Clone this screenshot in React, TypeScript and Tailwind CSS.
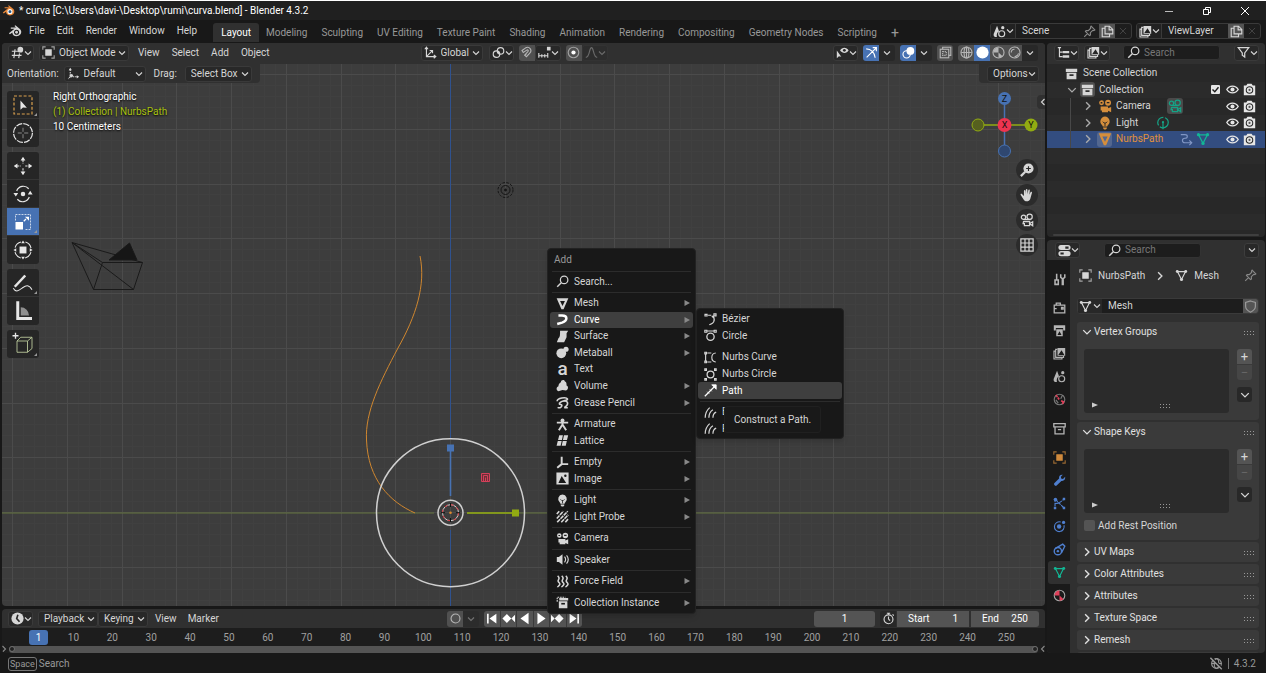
import React from "react";

/* ---------- icons: 16 x 16 drawings in the current colour ---------- */

const line = { fill: "none", stroke: "currentColor", strokeWidth: 1.4 };

const drawings: Record<string, React.ReactNode> = {
  blender: (
    <>
      <path d="M1 10.5 7.5 5.3H3.2V4h6L7.4 2.4l1-.9 5.2 4.3c3 2.6 1.6 8.2-3.8 8.2-3.2 0-5-2.2-4.8-4.4L2.2 11.7z" fill="currentColor" />
      <circle cx="9.8" cy="9.4" r="2.9" fill="#181818" />
      <circle cx="9.8" cy="9.4" r="1.6" fill="currentColor" />
    </>
  ),
  blenderColor: (
    <>
      <path d="M1 10.5 7.5 5.3H3.2V4h6L7.4 2.4l1-.9 5.2 4.3c3 2.6 1.6 8.2-3.8 8.2-3.2 0-5-2.2-4.8-4.4L2.2 11.7z" fill="#e8883a" />
      <circle cx="9.8" cy="9.4" r="3.1" fill="#fff" />
      <circle cx="9.8" cy="9.4" r="1.8" fill="#265787" />
    </>
  ),
  editor3d: (
    <>
      <path d="M1 6.5h8M1 11.5h12M5 4 3.5 15M10.5 9 9.5 15" {...line} />
      <circle cx="11.5" cy="4.5" r="3.5" fill="currentColor" />
    </>
  ),
  object: (
    <>
      <path d="M1 4.500V1h3.500M11.500 1H15v3.500M15 11.500V15h-3.500M4.500 15H1v-3.500" {...line} opacity=".7" />
      <rect x="4" y="4" width="8" height="8" fill="currentColor" />
    </>
  ),
  orient: (
    <>
      <path d="M4 3v9h9M4 12l-2.500 2.500" {...line} strokeDasharray="2 1" />
      <path d="m2 4 2-3 2 3zM12 10l3 2-3 2z" fill="currentColor" />
      <circle cx="5.500" cy="10.500" r="2" fill="currentColor" />
    </>
  ),
  axes: <path d="M3 2v11h11M1 4l2-2.500L5 4M12 11l2.500 2-2.500 2M3 13l7-7M7 5.500h3.500V9" {...line} />,
  pivot: (
    <>
      <circle cx="5.500" cy="10" r="4" {...line} />
      <circle cx="10.500" cy="6" r="4" {...line} />
      <circle cx="8" cy="8" r="1.200" fill="currentColor" />
    </>
  ),
  magnet: <path d="M2.500 5.500 7 2.300c4.500-2.500 8.500 3 5 6.500l-4 4.400-2.300-2 4-4.400c1-1.200-.2-2.500-1.400-1.700L4 8zM6 12l2-2" {...line} />,
  snap: (
    <>
      <path d="M1 12h11M1 8.500v6M4.700 10v4M8.300 10v4M12 8.500v6" {...line} />
      <rect x="11" y="1" width="4.500" height="4.500" fill="currentColor" />
    </>
  ),
  proportional: (
    <>
      <circle cx="8" cy="8" r="6.500" {...line} opacity=".45" />
      <circle cx="8" cy="8" r="2.600" fill="currentColor" />
    </>
  ),
  falloff: <path d="M1 14C6 14 5 2 8 2s2 12 7 12" {...line} />,
  eyeCursor: (
    <>
      <path d="M5 5.500C7.500 1.200 13 1.200 15.500 5.500 13 9.500 8 9.500 5 5.500z" fill="currentColor" />
      <circle cx="10.300" cy="5.300" r="1.700" fill="#282828" />
      <path d="M1 5.500v9.500l2.600-2.300 2.900.6z" fill="currentColor" />
    </>
  ),
  gizmo: <path d="M2 14 13.500 2.500M9.500 2h4.500v4.500M1.500 3.500c6 0 10.500 4.500 11 11" {...line} />,
  overlay: (
    <>
      <circle cx="5.700" cy="10.300" r="4.500" {...line} />
      <circle cx="10.300" cy="6" r="4.800" fill="currentColor" />
    </>
  ),
  xray: (
    <>
      <rect x="1.500" y="4" width="10.500" height="10.500" {...line} />
      <path d="M4.500 4V1.500h10V11.500H12" {...line} />
      <rect x="4.500" y="7" width="4.500" height="4.500" {...line} strokeDasharray="1.500 1" />
    </>
  ),
  wire: (
    <>
      <circle cx="8" cy="8" r="6.800" {...line} />
      <ellipse cx="8" cy="8" rx="3" ry="6.800" {...line} />
      <path d="M1.500 8h13M8 1.500v13" {...line} />
    </>
  ),
  solid: <circle cx="8" cy="8" r="7.500" fill="currentColor" />,
  material: (
    <>
      <circle cx="8" cy="8" r="6.800" {...line} />
      <path d="M8 1.500v6.500H1.500A6.500 6.500 0 0 1 8 1.500zM8 8l5 4.500A6.500 6.500 0 0 1 8 14.500z" fill="currentColor" />
    </>
  ),
  rendered: (
    <>
      <circle cx="8" cy="8" r="6.800" {...line} />
      <path d="M4 8a4 4 0 0 1 4-4M13 9c-1 3-3 4-5 4.500" {...line} />
    </>
  ),
  scene: (
    <>
      <path d="M5 1 .8 11c-.5 3 1.500 4 4 3.800C4 11 5.500 8.500 7.500 8z" fill="currentColor" />
      <circle cx="10.700" cy="10.800" r="3.700" {...line} />
      <circle cx="12" cy="3.300" r="2" fill="currentColor" />
    </>
  ),
  layers: (
    <>
      <path d="M3.500 5H1.200v9.800H11V12.500M5.500 3H3.300v9.800H13V11" {...line} />
      <path d="M5.500 1.200h9.500v9.500H5.500zM6.500 9.700h7.500L10.500 4z" fill="currentColor" fillRule="evenodd" />
    </>
  ),
  pin: <path d="M10 1.500 14.500 6l-1.200.8-1.300-.3-3 3 .2 2.700L8 13 3 8l.8-1.200 2.700.2 3-3-.3-1.300zM5.500 10.500 1.500 14.500" {...line} />,
  copy: <path d="M5 1.500h5.500l4 4V11H5zM10 1.500V6h4.500M5 4H1.500v10.500h9V11" {...line} />,
  close: <path d="m3 3 10 10M13 3 3 13" {...line} />,
  outliner: (
    <>
      <path d="M1 2h4M3 2v11h4M3 7.500h4" {...line} />
      <path d="M7 6h8v3H7zM7 11.500h8v3H7z" fill="currentColor" />
    </>
  ),
  search: (
    <>
      <circle cx="10" cy="6" r="4.600" {...line} strokeWidth="1.500" />
      <path d="M6.500 9.500 1.500 14.500" {...line} strokeWidth="1.800" />
    </>
  ),
  filter: <path d="M1.500 2h13L9.500 8.500v5l-3-2.200V8.500z" {...line} strokeWidth="1.500" />,
  box: (
    <>
      <path d="M1 2h14v4H1zM2 7h12v8H2z" fill="currentColor" />
      <path d="M5.500 9h5v2h-5z" fill="#303030" />
    </>
  ),
  archive: <path d="M1 2h14v4H1zM2.500 6v8.500h11V6M6 9.500h4" {...line} strokeWidth="1.600" />,
  eye: (
    <>
      <path d="M1 8c3.200-5.500 10.800-5.500 14 0-3.200 5.500-10.800 5.500-14 0z" {...line} strokeWidth="1.700" />
      <circle cx="8" cy="8" r="2.500" fill="currentColor" />
    </>
  ),
  photo: (
    <>
      <path d="M1 3h3l1.500-2h5L12 3h3v12H1z" fill="currentColor" />
      <circle cx="8" cy="8.500" r="4" fill="none" stroke="#282828" strokeWidth="1.300" />
      <circle cx="8" cy="8.500" r="1.300" fill="#555" />
    </>
  ),
  camera: (
    <>
      <path d="M4 1.500a2.800 2.800 0 1 0 .1 5.600A2.800 2.800 0 0 0 4 1.500zm7.500-.7a3.400 3.400 0 1 0 0 6.800 3.400 3.400 0 0 0 0-6.800zM3 8.500h8.500v2L15 9v6l-3.500-1.500V15H4.500v-2H3z" fill="currentColor" />
      <path d="M3 4.300h2M10 4.200h3" stroke="#222" strokeWidth="1.500" />
    </>
  ),
  cameraLine: (
    <>
      <circle cx="4" cy="4.800" r="2.500" {...line} />
      <circle cx="11" cy="4.200" r="3" {...line} />
      <path d="M4 7.500h8M4 9.800h7V14.500H5v-2.300H3.500zM11 12l3.500-2v4.500z" {...line} />
    </>
  ),
  light: (
    <>
      <path d="M8 .5a5.600 5.600 0 0 0-3.500 9.700c.6.500.9 1.200.9 1.800h5.200c0-.7.300-1.300.9-1.800A5.600 5.600 0 0 0 8 .5zM5.800 13h4.400v1L9 15.500H7L5.800 14z" fill="currentColor" />
      <path d="M5.500 6.500 7 8h2l1.500-1.500M8 8v3.500" fill="none" stroke="#222" />
    </>
  ),
  lightData: (
    <>
      <circle cx="8" cy="7.500" r="6" {...line} strokeDasharray="13 2" />
      <circle cx="8" cy="7" r="1.300" fill="currentColor" />
      <path d="M8 8v7" {...line} />
    </>
  ),
  mesh: <path d="M.8 1.500h14.400L9.300 15H6.700zM5 5l3 6.200L11 5z" fill="currentColor" fillRule="evenodd" />,
  meshData: (
    <>
      <path d="M3 3.200h10L8 13z" {...line} />
      <circle cx="2.800" cy="3" r="1.800" fill="currentColor" />
      <circle cx="13.200" cy="3" r="1.800" fill="currentColor" />
      <circle cx="8" cy="13" r="1.900" fill="currentColor" />
    </>
  ),
  modLink: <path d="M1 2h5c4 0 4 4.500 0 4.500s-4 5.500 0 5.500h8M11.500 9l3 3-3 3" {...line} />,
  curve: <path d="M3 3h4.500c7 0 7 6.500 0 8.800L1.500 13.500" fill="none" stroke="currentColor" strokeWidth="3.100" />,
  surface: <path d="M5 1h10l-2 3v5l-3 6H1l2-5c2-1 2-4 2-9z" fill="currentColor" />,
  metaball: (
    <>
      <circle cx="6.500" cy="9" r="6" fill="currentColor" />
      <circle cx="12.300" cy="4" r="3.200" fill="currentColor" />
    </>
  ),
  volume: <path d="M6 4c0-3 4-4 5-1 2 0 2 3 2 5 3 1 2 6-1 6l-4-.5L3 15c-3-.5-3-5 0-6 0-2 1-4 3-5z" fill="currentColor" />,
  grease: <path d="M1.500 6.500C1 2 13 1 14 3.500S7 5 4.500 8.500C3 12 8 9 7 12.500 6.500 14.500 4 15 2 14M9 6.500c5-1.500 6.500 2.500 4 5.500-1 1.200-2.500.8-2 2.500h3.500" {...line} strokeWidth="2" />,
  armature: (
    <>
      <circle cx="8" cy="3" r="2.400" fill="currentColor" />
      <path d="M1 5.700h14M8 5v4M8 8 3.500 15M8 8l4.500 7" {...line} strokeWidth="2.400" />
    </>
  ),
  lattice: <path d="M4 1.500h4.500L7.300 7.300H2.500zM9.800 1.500H15l-1.500 5.800H8.600zM2.200 8.700H7L5.700 14.500H.7zM8.300 8.700h5L12 14.500H7z" fill="currentColor" />,
  empty: <path d="M7 1v9M7 10h8M7 10l-5.500 4.500" {...line} strokeWidth="2.400" />,
  image: (
    <>
      <path d="M.5.500h15v15H.5zM3 13.500h9.500L7 5z" fill="currentColor" fillRule="evenodd" />
      <circle cx="11.500" cy="4.500" r="1.500" fill="#181818" />
    </>
  ),
  probe: <path d="M1 5l3-3.500M1 10.500 9 1.500M1.500 15 14.500 1.500M6.500 15 15 6M11.500 15 15 11" {...line} strokeWidth="2" strokeDasharray="5 .8" />,
  speaker: (
    <>
      <path d="M1 5h2.500L8 1.500v13L3.500 11H1z" fill="currentColor" />
      <path d="M10.500 4.500c1.500 2 1.500 5 0 7M13 3c2.500 3 2.500 7 0 10" {...line} />
    </>
  ),
  force: <path d="M2 1c5 4-2 5 1.500 8S2 14 2 15M7 1c5 4-2 5 1.500 8S7 14 7 15M12 1c5 4-2 5 1.500 8S12 14 12 15" {...line} strokeWidth="1.900" />,
  collection: (
    <>
      <path d="M4 2.500h11v3H4zM3.500 6.500h10.500V15H3.500z" fill="currentColor" />
      <path d="M6.500 8.500h4.500v2h-4.500z" fill="#181818" />
      <path d="M1.500 7V1.500h10" {...line} strokeDasharray="2 1" />
    </>
  ),
  bezier: <path d="M5 2.700h4M1.200 1.700h2.600v2H1.200zM12.200 1h2.600v2.500h-2.600zM9.500 4c5 2.500 4 8-3 10.500M10.500 3.500c2 1 2.500 4 1.500 6" {...line} />,
  bezierCircle: <><circle cx="8" cy="9.500" r="4.500" {...line} strokeWidth="1.600" /><path d="M4 2.500h8M1 1.500h2.500V4H1zM12.500 1.500H15V4h-2.500z" {...line} /></>,
  nurbsCurve: <path d="M2 3v10M4 2.500h5M4 13.500h5M14.500 2.500C8 3 8 13 14.500 13.500M1 1.500h2v2H1zM1 12.500h2v2H1z" {...line} />,
  nurbsCircle: <><circle cx="8" cy="8" r="4.200" {...line} strokeWidth="1.600" /><path d="M1 1h2v2H1zM13 1h2v2h-2zM1 13h2v2H1zM13 13h2v2h-2z" {...line} /></>,
  path: <><path d="M1 15 13 3" {...line} strokeWidth="1.600" /><path d="M15 1v5.500L9.500 1zM4 9.500l2.500 2.500M7 6.500 9.500 9" fill="currentColor" stroke="currentColor" /></>,
  hair: <path d="M1.500 14.500C1.500 9 3.500 5 7 2M6 14.500c0-5 1.500-8 5-10M11 14.500c0-4 1-6 4-7" {...line} strokeWidth="1.500" />,
  props: (
    <>
      <rect x=".5" y="1.200" width="15" height="6.300" rx="3.100" fill="currentColor" />
      <rect x=".5" y="8.700" width="15" height="6.300" rx="3.100" fill="currentColor" />
      <path d="M9 3h4v2.800H9zM3 10.400h4V13H3z" fill="#282828" />
    </>
  ),
  tools: <path d="M4.500 1v7M2.500 8.500h4V14h-4zM9.500 1.500v4l2 1.500v8M14.500 1.500v4l-2 1.500v8" {...line} strokeWidth="1.900" />,
  renderTab: <path d="M1.500 5h13v9.500h-13zM4 5V2.500h5V5M10.500 8h2v2h-2zM1.500 9.500h3" {...line} strokeWidth="1.600" />,
  output: <><path d="M1 1.500h14V8h-2.500V5h-9v3H1z" fill="currentColor" /><path d="M4 6.500h8V15H4zM5.500 13.500h5L8 9z" fill="currentColor" fillRule="evenodd" /></>,
  world: <><circle cx="8" cy="8" r="6.500" {...line} opacity=".6" /><path d="m3.500 2.500 2 2.500M6 5.500 7.500 8M10 9.500l3 1.500-1.500 2.500" fill="none" stroke="#e0405a" strokeWidth="2" /><path d="m11.500 3-2 4M3.500 8.500l3 4" {...line} opacity=".6" /></>,
  wrench: <path d="M15 3.500 12.300 6 10 5.500 9.700 3.500 12 1C9 .5 7 2.500 7.500 5.500L1.500 11.500C.5 13 2.800 15.500 4.500 14.300L10.300 8.500C13.500 9 15.500 6.500 15 3.500z" fill="currentColor" />,
  particles: <><path d="M2.500 2.500v11M3 3l10.500 10.500M3 8c4 0 7-2 11-6" {...line} strokeDasharray="4 1" /><circle cx="3" cy="3" r="2.200" fill="currentColor" /><path d="M12 1h3v3h-3zM12 12h3v3h-3zM1 12h3v3H1z" fill="currentColor" /></>,
  physics: <><path d="M13.500 6.500A6 6 0 1 1 9.500 2.500" {...line} /><circle cx="7.500" cy="8" r="2.700" fill="currentColor" /><circle cx="13" cy="3" r="2" fill="currentColor" /></>,
  constraint: <><circle cx="6" cy="10" r="4.500" {...line} strokeWidth="1.700" /><circle cx="6" cy="10" r="1.500" fill="currentColor" /><path d="M3 6.500 12 1.500l2.500 2.500L10.500 12" {...line} strokeWidth="1.700" /></>,
  matTab: <><circle cx="8" cy="8" r="6.500" {...line} /><path d="M8 1.800V8H1.700A6.300 6.300 0 0 1 8 1.800zM8 8l5 4.500A6.300 6.300 0 0 1 8 14.300z" fill="#e0405a" /></>,
  shield: <path d="M8 1.200 14 3v5c0 3.500-3 5.500-6 7-3-1.500-6-3.500-6-7V3z" {...line} strokeWidth="1.500" />,
  zoom: <><circle cx="9.700" cy="6.300" r="5.800" fill="currentColor" /><path d="M6 10 1 15" {...line} strokeWidth="2.600" /><path d="M7 6.300h5.400M9.700 3.600V9" stroke="#282828" strokeWidth="1.300" /></>,
  hand: <path d="M4.500 9V3.300c0-1.200 1.700-1.200 1.700 0V7l.5-5c0-1.300 1.800-1.300 1.800 0v5l1-4.500c.3-1.200 1.900-.9 1.700.3l-.5 5 1.300-3c.5-1 2-.5 1.700.6l-2 7.100C11 14 9.500 15.200 7.800 15.200c-2 0-3-1-4.200-3L.8 8c-.6-1.200.8-2 1.700-1z" fill="currentColor" />,
  gridIcon: <path d="M1 1h14v14H1zM5.700 1v14M10.300 1v14M1 5.700h14M1 10.300h14" {...line} />,
  clock: <><circle cx="8" cy="8" r="7.500" fill="currentColor" /><path d="M8.500 3.500 7 8l3.500 4" fill="none" stroke="#282828" strokeWidth="2" /></>,
  stopwatch: <><circle cx="8" cy="9" r="5.500" {...line} /><path d="M8 9V5.500M8 9l2 1.500M6 1.500h4M8 1.500v2M13 3l1.500 1.500" {...line} /></>,
  record: <circle cx="8" cy="8" r="5.500" {...line} />,
  first: <path d="M2.500 2h2v12h-2zM14 2v12L5.500 8z" fill="currentColor" />,
  prevKey: <path d="M6 2.500 11.500 8 6 13.500.5 8zM16 3.500v9L11.500 8z" fill="currentColor" />,
  back: <path d="M13 1v14L3 8z" fill="currentColor" />,
  play: <path d="M3 1v14l10-7z" fill="currentColor" />,
  nextKey: <path d="M10 2.500 15.500 8 10 13.500 4.500 8zM0 3.500v9L4.500 8z" fill="currentColor" />,
  last: <path d="M11.500 2h2v12h-2zM2 2v12l8.500-6z" fill="currentColor" />,
  offline: <><circle cx="8" cy="8" r="6" {...line} /><ellipse cx="8" cy="8" rx="2.800" ry="6" {...line} /><path d="M2 8h12" {...line} /><path d="M2 .5 15.500 14" stroke="#181818" strokeWidth="1.800" /><path d="M.5 1 14.500 15" {...line} strokeWidth="1.700" /></>,
  toolSelect: <><rect x="2" y="2" width="12" height="12" fill="none" stroke="#d9a04e" strokeWidth=".8" strokeDasharray="2 1.200" /><path d="M6.300 5v6.200l1.700-1.500 2.600.2z" fill="currentColor" /></>,
  toolCursor: <><circle cx="8" cy="8" r="6.300" fill="none" stroke="currentColor" strokeWidth=".8" strokeDasharray="4.200 .75" /><path d="M4.500 8h2.700M8.800 8h2.700M8 4.500v2.700M8 8.800v2.700" stroke="currentColor" strokeWidth=".5" opacity=".7" /></>,
  toolMove: <><path d="m8 1.800 1.600 2.500H6.400zM8 14.200l1.600-2.500H6.400zM1.800 8l2.500-1.600v3.200zM14.200 8l-2.500-1.600v3.200z" fill="currentColor" /><path d="M8 4v2.500M8 9.500V12M4 8h2.500M9.500 8H12" stroke="currentColor" strokeWidth=".7" strokeDasharray="1.500 .6" /></>,
  toolRotate: <><circle cx="8" cy="8" r="1.500" fill="currentColor" /><path d="M3.800 6a4.700 4.700 0 0 1 8-1.500M12.200 10a4.700 4.700 0 0 1-8 1.500" fill="none" stroke="currentColor" strokeWidth=".8" /><path d="M1.600 7.300h3.200L3.200 9.700zM11.200 8.300h3.200l-1.600-2.500z" fill="currentColor" /></>,
  toolScale: <><path d="M3 7V3h10v10H9.500" fill="none" stroke="currentColor" strokeWidth=".6" strokeDasharray="1.300 .7" opacity=".8" /><rect x="3" y="8" width="5" height="5" fill="currentColor" /><path d="m8.500 7.500 1.500-1.500" stroke="currentColor" strokeWidth=".8" /><path d="M9.300 4.500H12v2.700z" fill="currentColor" /></>,
  toolTransform: <><circle cx="8" cy="8" r="5.500" fill="none" stroke="currentColor" strokeWidth=".7" strokeDasharray="5.600 3.040" strokeDashoffset="-1.500" /><rect x="5.700" y="5.700" width="4.600" height="4.600" fill="currentColor" /><path d="m8 1.600 1.200 1.900H6.800zM8 14.400l1.200-1.900H6.800zM1.600 8l1.900-1.200v2.400zM14.400 8l-1.900-1.200v2.400z" fill="currentColor" /></>,
  toolPen: <><path d="M2.500 10.500 9.500 3" stroke="currentColor" strokeWidth="1.700" /><path d="M1.500 11.500c2 3.500 4.500 1 6.500-.5s4-2 6 1.500" fill="none" stroke="currentColor" strokeWidth=".7" /></>,
  toolMeasure: <><path d="M3.500 1.500h2v10.500H14v2H3.500z" fill="currentColor" /><path d="M6.500 5.500a5.500 5.500 0 0 1 5.500 5.500H6.500z" fill="currentColor" opacity=".55" /></>,
  toolCube: <><path d="M4 6h7v7.500H4zM4 6l2.500-2.500h7.500L11 6M14 3.500V11l-3 2.500" fill="none" stroke="#b9c79a" strokeWidth=".6" /><path d="M1 2.500h4M3 .5v4" stroke="currentColor" strokeWidth=".9" /></>,
};

const boxSizes = { sm: "size-[10px]", md: "size-[13px]", lg: "size-[14px]", xl: "size-6" };

function Icon({ name, size = "md", className = "" }: { name: string; size?: keyof typeof boxSizes; className?: string }) {
  return (
    <svg viewBox="0 0 16 16" aria-hidden="true" className={`shrink-0 ${boxSizes[size]} ${className}`}>
      {drawings[name]}
    </svg>
  );
}

function Chevron({ dir = "down", wide, className = "" }: { dir?: "down" | "right" | "left"; wide?: boolean; className?: string }) {
  const d = { down: "M1 2.500 4 5.500 7 2.500", right: "M2.500 1 5.500 4 2.500 7", left: "M5.500 1 2.500 4 5.500 7" }[dir];
  return (
    <svg viewBox="0 0 8 8" aria-hidden="true" className={`shrink-0 ${wide ? "size-[10px]" : "size-2"} ${className}`}>
      <path d={d} fill="none" stroke="currentColor" strokeWidth="1.100" />
    </svg>
  );
}

/* ---------- small controls ---------- */

function IconMenu({ icon, label, className = "" }: { icon: string; label: string; className?: string }) {
  return (
    <button aria-label={label} className={`flex h-4 items-center justify-between rounded-[3px] border border-[#3a3a3a] bg-[#282828] px-[2px] ${className}`}>
      <Icon name={icon} />
      <Chevron />
    </button>
  );
}

function Drop({ icon, label, value, className = "" }: { icon?: string; label: string; value: string; className?: string }) {
  return (
    <div className={`flex h-4 items-center rounded-[3px] border border-[#3a3a3a] bg-[#282828] pr-[2px] ${icon ? "pl-[2px]" : "pl-[5px]"} ${className}`}>
      {icon && <Icon name={icon} className="mr-1" />}
      <select aria-label={label} className="min-w-0 flex-1 appearance-none bg-transparent">
        <option>{value}</option>
      </select>
      <Chevron />
    </div>
  );
}

function Toggle({ icon, label, on, className = "" }: { icon: string; label: string; on?: boolean; className?: string }) {
  return (
    <button aria-label={label} className={`flex h-4 w-4 items-center justify-center ${on ? "bg-[#4772b3] text-white" : "bg-[#505050] text-[#b5b5b5]"} ${className}`}>
      <Icon name={icon} />
    </button>
  );
}

function Arrow({ label }: { label: string }) {
  return (
    <button aria-label={label} className="flex h-4 w-4 items-center justify-center rounded-r-[3px] bg-[#282828]">
      <Chevron />
    </button>
  );
}

/* ---------- top bars ---------- */

const workspaces = ["Modeling", "Sculpting", "UV Editing", "Texture Paint", "Shading", "Animation", "Rendering", "Compositing", "Geometry Nodes", "Scripting"];

function TitleBar() {
  return (
    <header className="flex h-5 shrink-0 items-center border-t border-white bg-[#202020] pl-[2px] text-white">
      <Icon name="blenderColor" size="md" />
      <h1 className="ml-1 flex-1">* curva [C:\Users\davi-\Desktop\rumi\curva.blend] - Blender 4.3.2</h1>
      <div className="flex items-center gap-7 pr-4">
        <button aria-label="Minimize"><svg className="size-[10px]" viewBox="0 0 10 10"><path d="M1 5.500h8" stroke="#bbb" /></svg></button>
        <button aria-label="Restore"><svg className="size-[10px]" viewBox="0 0 10 10"><path d="M1.500 3.500h5v5h-5zM3.500 3.500v-2h5v5h-2" fill="none" stroke="currentColor" /></svg></button>
        <button aria-label="Close"><svg className="size-[10px]" viewBox="0 0 10 10"><path d="m1 1 8 8M9 1 1 9" fill="none" stroke="currentColor" /></svg></button>
      </div>
    </header>
  );
}

function IdBlock({ icon, name, pinned, className = "" }: { icon: string; name: string; pinned?: boolean; className?: string }) {
  return (
    <div className={`flex h-4 items-stretch overflow-hidden rounded-[3px] border border-[#3a3a3a] bg-[#1d1d1d] ${className}`}>
      <button aria-label={`Browse ${name}`} className="flex w-[25px] items-center justify-between border-r border-[#3a3a3a] bg-[#222] px-[2px]">
        <Icon name={icon} />
        <Chevron />
      </button>
      <input aria-label={icon} defaultValue={name} className="min-w-0 flex-1 bg-transparent pl-[6px]" />
      {pinned && <button aria-label="Pin" className="px-[3px] text-[#888]"><Icon name="pin" /></button>}
      <button aria-label={`New ${name}`} className="flex w-4 items-center justify-center bg-[#545454]"><Icon name="copy" /></button>
      <button aria-label={`Delete ${name}`} className="flex w-4 items-center justify-center text-[#484848]"><Icon name="close" size="sm" /></button>
    </div>
  );
}

function MenuBar() {
  return (
    <div className="flex h-[22px] shrink-0 items-center bg-[#181818] pl-2 pr-[5px]">
      <Icon name="blender" size="lg" />
      <nav className="ml-[7px] flex gap-3">
        {["File", "Edit", "Render", "Window", "Help"].map((m) => <button key={m}>{m}</button>)}
      </nav>
      <div role="tablist" className="ml-4 flex flex-1 self-stretch pt-[3px] text-[#989898]">
        <button role="tab" aria-selected="true" className="rounded-t-[3px] bg-[#303030] px-2 text-white">Layout</button>
        {workspaces.map((w) => <button role="tab" key={w} className="px-[7px]">{w}</button>)}
        <button aria-label="Add workspace" className="px-[7px] text-[14px]">+</button>
      </div>
      <IdBlock icon="scene" name="Scene" pinned className="mr-1 w-[142px]" />
      <IdBlock icon="layers" name="ViewLayer" className="w-[125px]" />
    </div>
  );
}

/* ---------- 3D viewport ---------- */

function ViewHeader() {
  return (
    <div className="relative flex h-[21px] shrink-0 items-center bg-[#303030] pb-[2px] pl-[6px] pr-[7px]">
      <div className="flex flex-1 items-center">
        <IconMenu icon="editor3d" label="Editor type" className="w-[26px]" />
        <Drop icon="object" label="Mode" value="Object Mode" className="ml-[5px] w-[90px]" />
        <nav className="ml-[9px] flex gap-3">
          {["View", "Select", "Add", "Object"].map((m) => <button key={m}>{m}</button>)}
        </nav>
      </div>
      <div className="flex items-center pr-[18px]">
        <Drop icon="axes" label="Transform orientation" value="Global" className="w-[62px]" />
        <IconMenu icon="pivot" label="Pivot point" className="ml-[6px] w-[25px]" />
        <Toggle icon="magnet" label="Snap" className="ml-[5px] rounded-l-[3px]" />
        <IconMenu icon="snap" label="Snap to" className="w-[26px]" />
        <Toggle icon="proportional" label="Proportional editing" className="ml-[5px] rounded-l-[3px] text-white" />
        <div className="opacity-35"><IconMenu icon="falloff" label="Falloff" className="w-[26px]" /></div>
      </div>
      <div className="flex flex-1 items-center justify-end">
        <IconMenu icon="eyeCursor" label="Selectability" className="w-[25px]" />
        <Toggle icon="gizmo" label="Gizmos" on className="ml-[5px] rounded-l-[3px]" />
        <Arrow label="Gizmo options" />
        <Toggle icon="overlay" label="Overlays" on className="ml-[5px] rounded-l-[3px]" />
        <Arrow label="Overlay options" />
        <Toggle icon="xray" label="X-ray" className="ml-[5px] rounded-[3px]" />
        <Toggle icon="wire" label="Wireframe" className="ml-[5px] rounded-l-[3px]" />
        <Toggle icon="solid" label="Solid" on />
        <Toggle icon="material" label="Material preview" />
        <Toggle icon="rendered" label="Rendered" />
        <Arrow label="Shading options" />
      </div>
    </div>
  );
}

const ORIGIN = { x: 450, y: 512 };
const CELL = 54.75;

function gridPath(step: number) {
  let d = "";
  for (let i = -60; i <= 200; i++) {
    const x = Math.round(ORIGIN.x + i * step) + 0.5;
    const y = Math.round(ORIGIN.y + i * step) + 0.5;
    if (x > 0) d += `M${x} 0V3000`;
    if (y > 0) d += `M0 ${y}H4000`;
  }
  return d;
}

function Scene() {
  return (
    <svg aria-label="Viewport scene" className="absolute inset-0 h-full w-full">
      <g transform="translate(-2 -43)">
        <path d={gridPath(CELL / 5)} stroke="#404040" fill="none" />
        <path d={gridPath(CELL)} stroke="#4b4b4b" fill="none" />
        <path d="M0 513H434M467 513H4000" stroke="#64753f" />
        <path d="M450.500 0V438M450.500 530V3000" stroke="#2f528f" />
        <g fill="none" stroke="#1a1a1a">
          <path d="M72 242.500 102.500 262.500 142.500 262.500 133.500 289.500 93.500 289.500ZM102.500 262.500 93.500 289.500M72 242.500 133.500 289.500M72 242.500 142.500 262.500" />
          <path d="M129.500 243 137 260H109z" fill="#161616" />
        </g>
        <g fill="none" stroke="#161616">
          <circle cx="505.500" cy="190" r="7.500" strokeDasharray="2.500 1.500" />
          <circle cx="505.500" cy="190" r="4.500" />
          <circle cx="505.500" cy="190" r="1" fill="#141414" />
        </g>
        <path d="M420 256C426 285 416 316 398 348 380 382 365 412 366.500 440 368 480 390 502 415 513" fill="none" stroke="#d0872f" />
        <g fill="none" stroke="#d0d0d0">
          <circle cx="450.500" cy="512.700" r="74" strokeWidth="1.500" />
          <circle cx="450.500" cy="512.700" r="12.500" strokeWidth="1.500" />
          <circle cx="450.500" cy="512.700" r="8" />
          <circle cx="450.500" cy="512.700" r="8" stroke="#e0303a" strokeDasharray="3 3.280" />
        </g>
        <circle cx="450.500" cy="512.700" r="1.300" fill="#e08a2c" />
        <path d="M441 512.700h4M456 512.700h4M450.500 503v4M450.500 518v4" stroke="#111" />
        <path d="M450.500 496V448" stroke="#4772b3" strokeWidth="1.600" />
        <rect x="447" y="444.500" width="7" height="7" fill="#4772b3" />
        <path d="M467 513H515" stroke="#92ab12" strokeWidth="1.600" />
        <rect x="512" y="509.500" width="7" height="7" fill="#92ab12" />
        <path d="M481.500 473.500h8v8h-8zM483.500 481v-5.500h4V481M485.500 477.500V481" fill="#6b3038" stroke="#d4405a" />
      </g>
    </svg>
  );
}

const toolGroups = [
  [["toolSelect", "Select Box", true], ["toolCursor", "Cursor", false]],
  [["toolMove", "Move", false], ["toolRotate", "Rotate", false], ["toolScale", "Scale", true], ["toolTransform", "Transform", false]],
  [["toolPen", "Annotate", true], ["toolMeasure", "Measure", false]],
  [["toolCube", "Add Cube", true]],
] as const;

function ToolShelf() {
  return (
    <div className="absolute left-[5px] top-[48px] flex w-8 flex-col gap-[5px]">
      {toolGroups.map((group, i) => (
        <div key={i} className="flex flex-col divide-y divide-[#353535] overflow-hidden rounded-[3px]">
          {group.map(([icon, label, more]) => (
            <button key={icon} aria-label={label} className={`relative flex h-7 items-center justify-center ${icon === "toolScale" ? "bg-[#4772b3] text-white" : "bg-[#262626] text-[#e6e6e6]"}`}>
              <Icon name={icon} size="xl" />
              {more && <span className="absolute bottom-[2px] right-[2px] border-b-[3px] border-l-[3px] border-b-[#999] border-l-transparent" />}
            </button>
          ))}
        </div>
      ))}
    </div>
  );
}

function NavGizmo() {
  return (
    <div className="absolute right-[7px] top-[48px] flex flex-col items-end">
      <svg className="h-[68px] w-[67px]" viewBox="0 0 67 68" aria-label="Axis gizmo">
        <path d="M33.500 8V58" stroke="#4772b3" strokeWidth="1.500" />
        <path d="M8 34H60" stroke="#92ab12" strokeWidth="1.500" />
        <circle cx="7" cy="34" r="6" fill="#56601f" stroke="#92ab12" />
        <circle cx="33.500" cy="60" r="6" fill="#2f4770" stroke="#4772b3" />
        <circle cx="33.500" cy="7.500" r="6.500" fill="#4772b3" />
        <circle cx="60" cy="34" r="6.500" fill="#92ab12" />
        <circle cx="33.500" cy="34" r="7" fill="#ee3450" />
        <g fontSize="9" textAnchor="middle" fill="#111">
          <text x="33.500" y="11">Z</text>
          <text x="60" y="37">Y</text>
          <text x="33.500" y="37">X</text>
        </g>
      </svg>
      <div className="flex flex-col gap-[3px]">
        {[["zoom", "Zoom"], ["hand", "Pan"], ["cameraLine", "Camera view"], ["gridIcon", "Orthographic"]].map(([icon, label]) => (
          <button key={icon} aria-label={label} className="flex size-[22px] items-center justify-center rounded-full bg-[#2b2b2b]">
            <Icon name={icon} size="lg" />
          </button>
        ))}
      </div>
    </div>
  );
}

function Viewport() {
  return (
    <section className="relative flex min-h-0 flex-1 flex-col overflow-hidden rounded-[4px] bg-[#3d3d3d]">
      <Scene />
      <ViewHeader />
      <div className="relative flex h-[19px] shrink-0 justify-between">
        <div className="flex items-center rounded-br-[4px] bg-[#303030] pl-[5px] pr-2">
          <span>Orientation:</span>
          <Drop icon="orient" label="Orientation" value="Default" className="ml-[5px] w-[82px]" />
          <span className="ml-[8px]">Drag:</span>
          <Drop label="Drag" value="Select Box" className="ml-[8px] w-[67px]" />
        </div>
        <div className="flex items-center rounded-bl-[4px] bg-[#303030] pl-2 pr-[6px]">
          <Drop label="Options" value="Options" className="w-[52px]" />
        </div>
      </div>
      <ToolShelf />
      <div className="absolute left-[51px] top-[46px] leading-[15px] text-white [text-shadow:0_1px_2px_#000]">
        <p>Right Orthographic</p>
        <p className="text-[#a8c00f]">(1) Collection | NurbsPath</p>
        <p>10 Centimeters</p>
      </div>
      <NavGizmo />
      <button aria-label="Open sidebar" className="absolute right-0 top-[52px] flex h-[14px] w-2 items-center justify-end rounded-l bg-[#303030]"><Chevron dir="left" className="-mr-[2px]" /></button>
    </section>
  );
}

/* ---------- timeline ---------- */

const frames = Array.from({ length: 25 }, (_, i) => (i + 1) * 10);

function NumberField({ label, value, className = "" }: { label: string; value: string; className?: string }) {
  return (
    <label className={`flex h-4 items-center justify-between bg-[#545454] px-[11px] text-white ${className}`}>
      {label}
      <input defaultValue={value} className="w-6 bg-transparent text-right" />
    </label>
  );
}

function Timeline() {
  return (
    <section className="flex h-[44px] shrink-0 flex-col overflow-hidden rounded-[4px] bg-[#1d1d1d]">
      <div className="flex h-[19px] shrink-0 items-center bg-[#303030] pl-[6px] pr-[6px]">
        <div className="flex flex-1 items-center">
          <IconMenu icon="clock" label="Editor type" className="w-[25px]" />
          <div className="ml-[5px] flex">
            <Drop label="Playback" value="Playback" className="w-[60px]" />
            <Drop label="Keying" value="Keying" className="w-[50px]" />
          </div>
          <nav className="ml-[7px] flex gap-[11px]">
            <button>View</button>
            <button>Marker</button>
          </nav>
        </div>
        <div className="flex items-center pr-[18px]">
          <Toggle icon="record" label="Auto keying" className="rounded-l-[3px]" />
          <div className="opacity-40"><Arrow label="Auto keying options" /></div>
          <div className="ml-[5px] flex h-4 w-[98px] divide-x divide-[#3a3a3a] overflow-hidden rounded-[3px] bg-[#545454] text-white">
            {["first", "prevKey", "back", "play", "nextKey", "last"].map((n) => (
              <button key={n} aria-label={n} className="flex flex-1 items-center justify-center"><Icon name={n} /></button>
            ))}
          </div>
        </div>
        <div className="flex flex-1 items-center justify-end">
          <input aria-label="Current frame" defaultValue="1" className="h-4 w-[61px] rounded-[3px] bg-[#545454] text-center text-white" />
          <button aria-label="Use preview range" className="ml-[5px] flex size-4 items-center justify-center rounded-l-[3px] bg-[#282828]"><Icon name="stopwatch" /></button>
          <NumberField label="Start" value="1" className="ml-[1px] w-[72px]" />
          <NumberField label="End" value="250" className="ml-[2px] w-[68px] rounded-r-[3px]" />
        </div>
      </div>
      <div className="flex h-[17px] shrink-0 items-end pr-[19px] text-center leading-[15px] text-[#a0a0a0]">
        <div className="flex w-[52px] pl-[27px]"><span className="h-[15px] w-[19px] rounded-[3px] bg-[#4772b3] text-white">1</span></div>
        {frames.map((f) => <span key={f} className="w-0 flex-1">{f}</span>)}
      </div>
      <div className="flex h-2 shrink-0 items-center gap-[1px] text-[#888]">
        <Chevron dir="right" className="-ml-[2px]" />
        <div className="flex h-[7px] flex-1 items-center justify-between rounded-full bg-[#545454]">
          <span className="size-[6px] rounded-full border border-[#707070] bg-[#222]" />
          <span className="size-[6px] rounded-full border border-[#707070] bg-[#222]" />
        </div>
        <Chevron dir="left" className="-mr-[2px]" />
      </div>
    </section>
  );
}

/* ---------- outliner ---------- */

function SearchBox({ className = "" }: { className?: string }) {
  return (
    <label className={`flex h-[15px] items-center gap-1 rounded-[3px] border border-[#333] bg-[#1d1d1d] px-[3px] ${className}`}>
      <Icon name="search" />
      <input aria-label="Search" placeholder="Search" className="min-w-0 flex-1 bg-transparent placeholder:text-[#777]" />
    </label>
  );
}

function RowToggles() {
  return (
    <span className="ml-auto flex gap-1 text-[#e6e6e6]">
      <button aria-label="Hide in viewport"><Icon name="eye" /></button>
      <button aria-label="Disable in renders"><Icon name="photo" /></button>
    </span>
  );
}

function ObjectRow({ icon, label, selected, children }: { icon: string; label: string; selected?: boolean; children: React.ReactNode }) {
  return (
    <li className={`flex min-h-0 flex-1 items-center pl-[23px] pr-[9px] ${selected ? "bg-[#334d80] text-[#e0913c]" : "even:bg-[#2b2b2b]"}`}>
      <span className="mr-[12px] h-full w-px border-l border-[#484848]" />
      <Chevron dir="right" wide className="text-[#aaa]" />
      <span className={`ml-1 mr-1 flex size-[15px] items-center justify-center rounded-[3px] text-[#d58e3c] ${selected ? "bg-[#53678f]" : ""}`}><Icon name={icon} size="lg" /></span>
      <span>{label}</span>
      {children}
      <RowToggles />
    </li>
  );
}

function Outliner() {
  return (
    <section className="flex h-[194px] shrink-0 flex-col overflow-hidden rounded-[4px] bg-[#282828]">
      <div className="flex h-[21px] shrink-0 items-center bg-[#303030] pb-[2px] pl-[7px] pr-[6px]">
        <IconMenu icon="outliner" label="Editor type" className="w-[25px]" />
        <IconMenu icon="layers" label="Display mode" className="ml-[5px] w-[26px]" />
        <SearchBox className="ml-[13px] w-[97px]" />
        <IconMenu icon="filter" label="Filter" className="ml-auto w-[25px]" />
      </div>
      <ul className="mt-px flex h-[165px] flex-col">
        <li className="flex flex-1 items-center gap-[5px] pl-[18px]"><Icon name="box" />Scene Collection</li>
        <li className="flex flex-1 items-center bg-[#2b2b2b] pl-5 pr-[9px]">
          <Chevron wide className="text-[#aaa]" />
          <span className="ml-[3px] mr-1 flex size-[15px] items-center justify-center rounded-[3px] bg-[#505050]"><Icon name="box" /></span>
          Collection
          <label className="relative ml-auto mr-[6px] flex size-[9px]">
            <input type="checkbox" defaultChecked aria-label="Include collection" className="peer size-[9px] appearance-none rounded-[1px] bg-[#e6e6e6]" />
            <svg viewBox="0 0 9 9" aria-hidden="true" className="pointer-events-none absolute inset-0 hidden peer-checked:block">
              <path d="M1.500 4.500 3.800 6.800 7.500 2.300" fill="none" stroke="#1d1d1d" strokeWidth="1.400" />
            </svg>
          </label>
          <span className="flex gap-1 text-[#e6e6e6]">
            <button aria-label="Hide collection"><Icon name="eye" /></button>
            <button aria-label="Disable collection in renders"><Icon name="photo" /></button>
          </span>
        </li>
        <ObjectRow icon="camera" label="Camera">
          <span className="ml-4 flex size-4 items-center justify-center rounded-[3px] bg-[#4a4a4a] text-[#15a386]"><Icon name="cameraLine" size="lg" /></span>
        </ObjectRow>
        <ObjectRow icon="light" label="Light"><Icon name="lightData" size="lg" className="ml-[18px] text-[#15a386]" /></ObjectRow>
        <ObjectRow icon="mesh" label="NurbsPath" selected>
          <Icon name="modLink" className="ml-[17px] text-[#8196c4]" />
          <Icon name="meshData" size="lg" className="ml-[3px] text-[#12b795]" />
        </ObjectRow>
        {[5, 6, 7, 8, 9].map((n) => <li key={n} aria-hidden="true" className="flex-1 even:bg-[#2b2b2b]" />)}
      </ul>
      <div className="mx-[6px] mt-1 h-[2px] rounded-full bg-[#3f3f3f]" />
    </section>
  );
}

/* ---------- properties ---------- */

const propertyTabs: [string, string, string][] = [
  ["tools", "Tool", "text-[#b5b5b5] mb-[5px]"],
  ["renderTab", "Render", "text-[#b5b5b5]"],
  ["output", "Output", "text-[#b5b5b5]"],
  ["layers", "View Layer", "text-[#b5b5b5]"],
  ["scene", "Scene", "text-[#b5b5b5]"],
  ["world", "World", "text-[#b5b5b5] mb-[6px]"],
  ["archive", "Collection", "text-[#b5b5b5] mb-[6px]"],
  ["object", "Object", "text-[#d08a3c]"],
  ["wrench", "Modifiers", "text-[#4f7fcf]"],
  ["particles", "Particles", "text-[#4f7fcf]"],
  ["physics", "Physics", "text-[#4f7fcf]"],
  ["constraint", "Constraints", "text-[#4f7fcf]"],
  ["meshData", "Data", "text-[#12b795] bg-[#303030] rounded-l-[3px]"],
  ["matTab", "Material", "text-[#a0a0a0]"],
];

function Grip() {
  return (
    <svg viewBox="0 0 10 5" className="h-[5px] w-[10px] text-[#999]" aria-hidden="true">
      <path d="M0 1.500h10M0 4.500h10" stroke="currentColor" strokeDasharray="1 2" />
    </svg>
  );
}

function Panel({ title, children }: { title: string; children?: React.ReactNode }) {
  return (
    <section className="shrink-0 rounded-[3px] bg-[#3a3a3a]">
      <h2 className="flex h-5 items-center gap-[2px] pl-[5px] pr-[5px] text-[#e0e0e0]">
        <Chevron wide dir={children ? "down" : "right"} />
        <span className="flex-1">{title}</span>
        <Grip />
      </h2>
      {children}
    </section>
  );
}

function ListBox({ name }: { name: string }) {
  return (
    <div className="flex gap-2 px-[7px] pt-[7px]">
      <div className="flex h-16 flex-1 items-end rounded-[3px] bg-[#2b2b2b] px-2 pb-[5px]">
        <svg viewBox="0 0 6 6" className="size-[6px] flex-none text-[#ccc]" aria-hidden="true"><path d="M0 .5v5L6 3z" fill="currentColor" /></svg>
        <span className="flex flex-1 justify-center pl-[10px]"><Grip /></span>
      </div>
      <div className="flex w-[15px] flex-col text-[13px] leading-[15px]">
        <button aria-label={`Add to ${name}`} className="h-[15px] rounded-t-[3px] bg-[#545454]">+</button>
        <button aria-label={`Remove from ${name}`} className="mt-px h-[15px] rounded-b-[3px] bg-[#464646] text-[#666]">−</button>
        <button aria-label={`${name} specials`} className="mt-[7px] flex h-[15px] items-center justify-center rounded-[3px] bg-[#282828]"><Chevron wide /></button>
      </div>
    </div>
  );
}

function Properties() {
  return (
    <section className="flex min-h-0 flex-1 flex-col overflow-hidden rounded-[4px] bg-[#303030]">
      <div className="flex h-5 shrink-0 items-center pl-[8px] pr-[6px]">
        <IconMenu icon="props" label="Editor type" className="w-[25px]" />
        <SearchBox className="ml-6 w-[97px]" />
        <button aria-label="Options" className="ml-auto flex size-[15px] items-center justify-center rounded-[3px] border border-[#3d3d3d] bg-[#282828]"><Chevron /></button>
      </div>
      <div className="flex min-h-0 flex-1">
        <div role="tablist" className="flex w-[23px] shrink-0 flex-col bg-[#1a1a1a] pl-[1px] pt-2">
          {propertyTabs.map(([icon, label, tone]) => (
            <button key={label} role="tab" aria-label={label} aria-selected={label === "Data"} className={`flex h-[23px] shrink-0 items-center justify-center ${tone}`}>
              <Icon name={icon} />
            </button>
          ))}
        </div>
        <div className="flex min-w-0 flex-1 flex-col gap-[2px] overflow-hidden pl-[7px] pr-[6px]">
          <div className="flex h-[31px] shrink-0 items-center pl-[2px] pr-[2px]">
            <Icon name="object" />
            <span className="ml-[6px]">NurbsPath</span>
            <Chevron dir="right" wide className="mx-[10px]" />
            <Icon name="meshData" />
            <span className="ml-[6px] flex-1">Mesh</span>
            <Icon name="pin" className="text-[#888]" />
          </div>
          <div className="mb-[6px] mt-[5px] flex h-4 shrink-0 overflow-hidden rounded-[3px] border border-[#3a3a3a] bg-[#1d1d1d]">
            <button aria-label="Browse mesh" className="flex w-6 items-center justify-between bg-[#282828] px-[1px]"><Icon name="meshData" /><Chevron /></button>
            <input aria-label="Mesh name" defaultValue="Mesh" className="min-w-0 flex-1 bg-transparent pl-[6px]" />
            <button aria-label="Fake user" className="flex w-[15px] items-center justify-center bg-[#545454] text-[#999]"><Icon name="shield" /></button>
          </div>
          <Panel title="Vertex Groups">
            <div className="pb-[7px]"><ListBox name="Vertex Groups" /></div>
          </Panel>
          <Panel title="Shape Keys">
            <ListBox name="Shape Keys" />
            <label className="flex items-center gap-[3px] px-[7px] pb-2 pt-[6px] leading-[13px]">
              <input type="checkbox" className="size-[11px] appearance-none rounded-[2px] bg-[#545454]" />
              Add Rest Position
            </label>
          </Panel>
          {["UV Maps", "Color Attributes", "Attributes", "Texture Space", "Remesh"].map((t) => <Panel key={t} title={t} />)}
          <div aria-hidden="true" className="h-5 shrink-0 rounded-[3px] bg-[#3a3a3a]" />
        </div>
      </div>
    </section>
  );
}

/* ---------- Add menu ---------- */

type Entry = [icon: string, label: string, more?: boolean] | "rule" | "space";

const addEntries: Entry[] = [
  ["search", "Search..."], "rule",
  ["mesh", "Mesh", true], ["curve", "Curve", true], ["surface", "Surface", true], ["metaball", "Metaball", true], ["glyph", "Text"], ["volume", "Volume", true], ["grease", "Grease Pencil", true], "rule",
  ["armature", "Armature"], ["lattice", "Lattice"], "rule",
  ["empty", "Empty", true], ["image", "Image", true], "rule",
  ["light", "Light", true], ["probe", "Light Probe", true], "rule",
  ["camera", "Camera"], "rule",
  ["speaker", "Speaker"], "rule",
  ["force", "Force Field", true], "rule",
  ["collection", "Collection Instance", true],
];

const curveEntries: Entry[] = [
  ["bezier", "Bézier"], ["bezierCircle", "Circle"], "space",
  ["nurbsCurve", "Nurbs Curve"], ["nurbsCircle", "Nurbs Circle"], ["path", "Path"], "rule",
  ["hair", "Empty Hair"], ["hair", "Fur"],
];

function Rule() {
  return <div role="separator" className="mx-[2px] flex h-[5px] shrink-0 items-center"><span className="h-px flex-1 bg-[#2c2c2c]" /></div>;
}

function Entries({ entries, active }: { entries: Entry[]; active: string }) {
  return entries.map((e, i) => {
    if (e === "rule") return <Rule key={i} />;
    if (e === "space") return <div key={i} className="h-[5px] shrink-0" />;
    const [icon, label, more] = e;
    return (
      <button key={i} role="menuitem" className={`flex min-h-0 flex-1 items-center gap-[5px] rounded-[3px] px-[6px] text-left ${label === active ? "bg-[#3f3f3f] text-white" : ""}`}>
        {icon === "glyph" ? <span aria-hidden="true" className="w-[13px] text-center text-[19px] font-medium leading-[10px]">a</span> : <Icon name={icon} />}
        <span className="flex-1 whitespace-nowrap">{label}</span>
        {more && <svg viewBox="0 0 6 6" className="-mr-[3px] size-[6px] text-[#888]" aria-hidden="true"><path d="M.5 0v6L6 3z" fill="currentColor" /></svg>}
      </button>
    );
  });
}

function AddMenu() {
  return (
    <>
      <div role="menu" aria-label="Add" className="absolute left-[547px] top-[248px] flex h-[366px] w-[149px] flex-col rounded-[4px] border border-[#222] bg-[#181818] px-[2px] pb-[2px] pt-[3px] shadow-md">
        <div className="flex flex-1 items-center px-[4px] text-[#999]">Add</div>
        <Rule />
        <Entries entries={addEntries} active="Curve" />
      </div>
      <div role="menu" aria-label="Curve" className="absolute left-[696px] top-[308px] flex h-[131px] w-[148px] flex-col rounded-[4px] border border-[#222] bg-[#181818] px-[1px] pb-[1px] pt-[2px] shadow-md">
        <Entries entries={curveEntries} active="Path" />
      </div>
      <div role="tooltip" className="absolute left-[724px] top-[406px] rounded-[3px] border border-[#202020] bg-[#191919] px-[9px] py-[6px] leading-[13px]">Construct a Path.</div>
    </>
  );
}

export default function App() {
  return (
    <div className="relative flex h-screen flex-col overflow-hidden bg-[#181818] font-[Roboto,sans-serif] text-[10px] leading-[14px] text-[#d6d6d6]">
      <TitleBar />
      <MenuBar />
      <main className="flex min-h-0 flex-1 gap-[2px] pb-px pl-[2px] pr-px pt-px">
        <div className="flex min-w-0 flex-1 flex-col gap-[3px]">
          <Viewport />
          <Timeline />
        </div>
        <aside className="flex w-[218px] shrink-0 flex-col gap-[3px]">
          <Outliner />
          <Properties />
        </aside>
      </main>
      <footer className="flex h-[19px] shrink-0 items-center pl-2 pr-[10px] text-[#989898]">
        <kbd className="rounded-[3px] border border-[#777] px-[1px] font-[Roboto,sans-serif] text-[9px] leading-[12px]">Space</kbd>
        <span className="ml-[2px] flex-1">Search</span>
        <Icon name="offline" />
        <span className="mx-[5px] h-[11px] w-px bg-[#777]" />
        <span>4.3.2</span>
      </footer>
      <AddMenu />
    </div>
  );
}
